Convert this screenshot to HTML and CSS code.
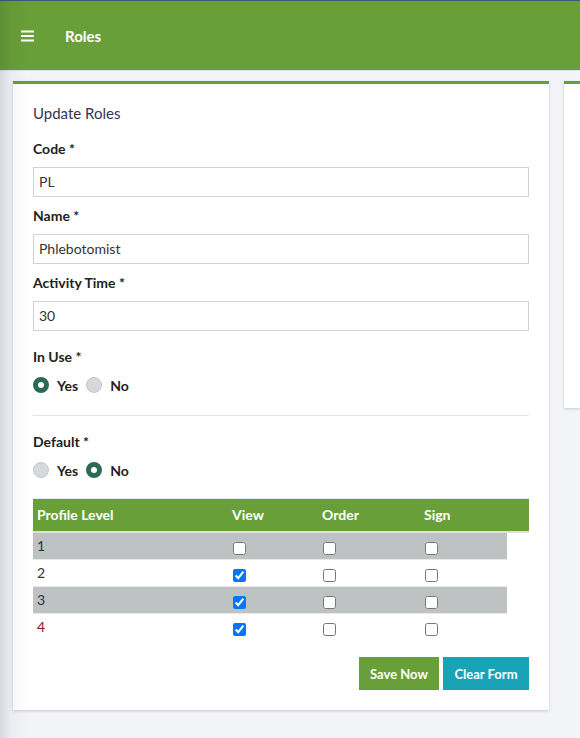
FILE: index.html
```html
<!DOCTYPE html>
<html>
<head>
<meta charset="utf-8">
<link rel="stylesheet" href="styles.css">
</head>
<body>
<div class="edge-shadow"></div>
<header class="topbar">
  <span class="burger">
    <svg width="13" height="12" viewBox="0 0 13 12"><rect x="0" y="0.5" width="13" height="2" fill="#fff"/><rect x="0" y="5" width="13" height="2" fill="#fff"/><rect x="0" y="9.5" width="13" height="2" fill="#fff"/></svg>
  </span>
  <span class="title">Roles</span>
</header>
<main class="content">
  <section class="card form-card">
    <h2 class="card-title">Update Roles</h2>
    <label class="lbl">Code *</label>
    <div class="input">PL</div>
    <label class="lbl">Name *</label>
    <div class="input">Phlebotomist</div>
    <label class="lbl">Activity Time *</label>
    <div class="input">30</div>
    <label class="lbl lbl-gap">In Use *</label>
    <div class="radios">
      <span class="radio on"></span><span class="rtext">Yes</span>
      <span class="radio"></span><span class="rtext">No</span>
    </div>
    <hr class="divider">
    <label class="lbl">Default *</label>
    <div class="radios">
      <span class="radio"></span><span class="rtext">Yes</span>
      <span class="radio on"></span><span class="rtext">No</span>
    </div>
    <div class="table">
      <div class="thead">
        <div class="th">Profile Level</div>
        <div class="th">View</div>
        <div class="th">Order</div>
        <div class="th">Sign</div>
        <div class="th"></div>
      </div>
      <div class="tr odd">
        <div class="td">1</div>
        <div class="td"><input type="checkbox"></div>
        <div class="td"><input type="checkbox"></div>
        <div class="td"><input type="checkbox"></div>
      </div>
      <div class="tr">
        <div class="td">2</div>
        <div class="td"><input type="checkbox" checked></div>
        <div class="td"><input type="checkbox"></div>
        <div class="td"><input type="checkbox"></div>
      </div>
      <div class="tr odd">
        <div class="td">3</div>
        <div class="td"><input type="checkbox" checked></div>
        <div class="td"><input type="checkbox"></div>
        <div class="td"><input type="checkbox"></div>
      </div>
      <div class="tr last">
        <div class="td red">4</div>
        <div class="td"><input type="checkbox" checked></div>
        <div class="td"><input type="checkbox"></div>
        <div class="td"><input type="checkbox"></div>
      </div>
    </div>
    <div class="actions">
      <button class="btn save">Save Now</button>
      <button class="btn clear">Clear Form</button>
    </div>
  </section>
  <section class="card side-card"></section>
</main>
</body>
</html>
```
FILE: styles.css
```css
html, body { margin: 0; padding: 0; }
body {
  background: #f3f4f8;
  font-family: "Lato", "Liberation Sans", sans-serif;
  color: #222;
  width: 580px;
  height: 738px;
  overflow: hidden;
  position: relative;
}
.edge-shadow {
  position: absolute;
  left: 0; top: 0;
  width: 28px; height: 738px;
  background: linear-gradient(to right, rgba(0,0,20,0.11), rgba(0,0,20,0.03) 40%, rgba(0,0,0,0));
  pointer-events: none;
  z-index: 5;
}
.topbar {
  border-top: 1px solid #3f5878;
  border-bottom: 1px solid #e1e2e8;
  background: #689f38;
  display: flex;
  align-items: center;
  box-sizing: border-box;
  height: 71px;
}
.burger { margin-left: 21px; display: flex; margin-top: 1px; }
.title { margin-left: 31px; color: #fff; font-weight: 700; font-size: 15px; }
.content {
  display: flex;
  gap: 15px;
  padding: 10px 0 0 13px;
  align-items: flex-start;
}
.card {
  background: #fff;
  border-top: 3px solid #689f38;
  box-shadow: 0 1px 3px rgba(0,0,0,0.18);
}
.form-card {
  width: 536px;
  box-sizing: border-box;
  padding: 19px 20px 20px;
  display: flex;
  flex-direction: column;
}
.side-card { flex: 1; height: 324px; }
.card-title {
  margin: 0 0 16px;
  font-size: 15px;
  font-weight: 400;
  line-height: 20px;
  color: #36344f;
}
.lbl {
  font-size: 14px;
  font-weight: 700;
  line-height: 20px;
  margin-bottom: 8px;
}
.input {
  height: 30px;
  box-sizing: border-box;
  border: 1px solid #cfd3d8;
  padding: 0 5px;
  font-size: 14px;
  line-height: 28px;
  color: #333;
  margin-bottom: 9px;
}
.lbl-gap { margin-top: 7px; }
.radios {
  display: flex;
  align-items: center;
  height: 20px;
  font-size: 14px;
  font-weight: 700;
}
.radio {
  width: 16px; height: 16px;
  box-sizing: border-box;
  border-radius: 50%;
  background: #d6d8da;
  border: 1px solid #c4c7ca;
  margin-right: 8px;
}
.radio.on {
  background: #2c6a51;
  border: 5px solid #2c6a51;
  position: relative;
}
.radio.on::after {
  content: "";
  position: absolute;
  left: 0; top: 0;
  width: 6px; height: 6px;
  border-radius: 50%;
  background: #fff;
}
.rtext { margin-right: 8px; color: #222; }
.divider {
  border: 0;
  border-top: 1px solid #e3e4e6;
  margin: 20px 0 16px;
  height: 0;
}
.table { margin-top: 18px; }
.thead {
  display: grid;
  grid-template-columns: 195px 90px 102px 87px 22px;
  background: #689f38;
  border-top: 1px solid #e6e8ea;
  border-bottom: 2px solid #dde0e3;
}
.th {
  height: 32px;
  line-height: 32px;
  padding-left: 4px;
  color: #fff;
  font-weight: 700;
  font-size: 14px;
}
.tr {
  display: grid;
  grid-template-columns: 195px 90px 102px 87px;
  width: 474px;
  height: 26px;
  border-bottom: 1px solid #e6e8ea;
  background: #fff;
}
.tr.last { border-bottom: 0; height: 27px; }
.tr.odd { background: #bfc2c3; }
.td {
  padding-left: 4px;
  font-size: 14px;
  line-height: 26px;
  color: #333;
}
.td.red { color: #7a1f1f; }
.td input {
  margin: 9px 0 0 1px;
  width: 13px; height: 13px;
  vertical-align: top;
}
.actions {
  display: flex;
  justify-content: flex-end;
  gap: 4px;
  margin-top: 16px;
}
.btn {
  border: 0;
  height: 33px;
  color: #fff;
  font-family: "Lato", "Liberation Sans", sans-serif;
  font-weight: 700;
  font-size: 13px;
  padding: 0;
}
.save { background: #689f38; width: 80px; }
.clear { background: #19a3b7; width: 86px; }
```
